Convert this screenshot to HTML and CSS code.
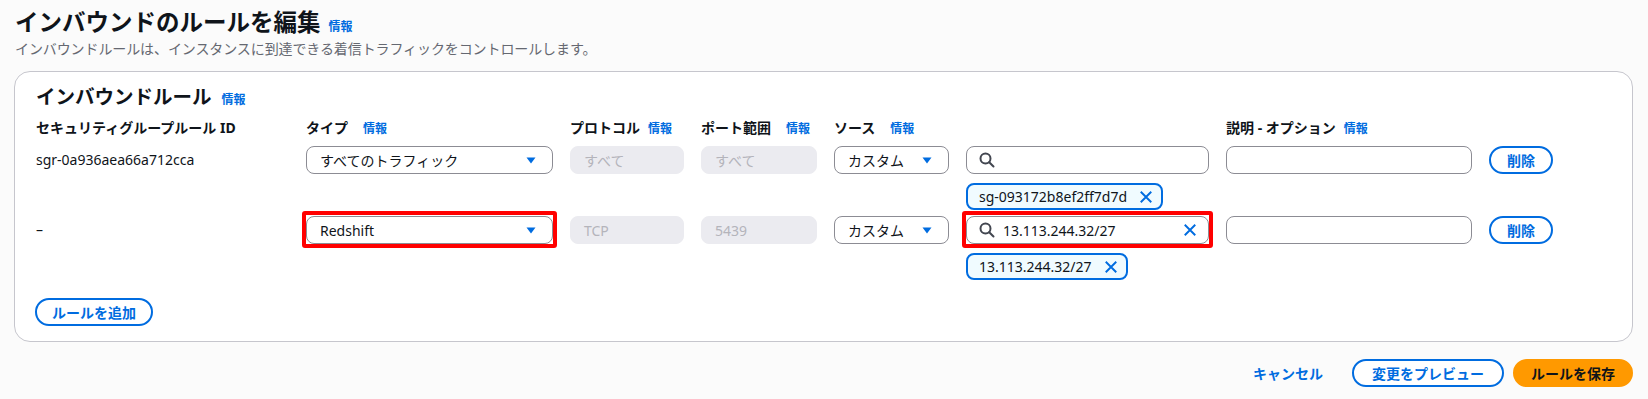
FILE: index.html
```html
<!DOCTYPE html>
<html lang="ja">
<head>
    <meta charset="UTF-8">
    <meta name="viewport" content="width=device-width, initial-scale=1.0">
    <title>インバウンドのルールを編集</title>
    <link rel="stylesheet" href="styles.css">
</head>
<body>
    <div class="page">
        <header class="page-header">
            <h1 class="page-title">インバウンドのルールを編集 <a class="info-link" href="#">情報</a></h1>
            <p class="page-desc">インバウンドルールは、インスタンスに到達できる着信トラフィックをコントロールします。</p>
        </header>

        <section class="card">
            <h2 class="card-title">インバウンドルール <a class="info-link" href="#">情報</a></h2>

            <!-- Column labels -->
            <div class="rules-grid rules-head">
                <div class="col-label">セキュリティグループルール ID</div>
                <div class="col-label">タイプ <a class="info-link info-wide" href="#">情報</a></div>
                <div class="col-label">プロトコル <a class="info-link" href="#">情報</a></div>
                <div class="col-label">ポート範囲 <a class="info-link info-wide" href="#">情報</a></div>
                <div class="col-label">ソース <a class="info-link info-wide" href="#">情報</a></div>
                <div></div>
                <div class="col-label">説明 - オプション <a class="info-link" href="#">情報</a></div>
                <div></div>
            </div>

            <!-- Rule 1 -->
            <div class="rules-grid rule">
                <div class="rule-id">sgr-0a936aea66a712cca</div>
                <div class="select">
                    <span>すべてのトラフィック</span>
                    <svg class="caret" width="10" height="7" viewBox="0 0 10 7"><path d="M0.5 0.5h9L5 6.5z" fill="#006ce0"/></svg>
                </div>
                <div class="field field-disabled">すべて</div>
                <div class="field field-disabled">すべて</div>
                <div class="select">
                    <span>カスタム</span>
                    <svg class="caret" width="10" height="7" viewBox="0 0 10 7"><path d="M0.5 0.5h9L5 6.5z" fill="#006ce0"/></svg>
                </div>
                <div class="source-cell">
                    <div class="field search">
                        <svg class="search-icon" width="16" height="16" viewBox="0 0 16 16"><circle cx="6.5" cy="6.5" r="5" fill="none" stroke="#424650" stroke-width="2"/><path d="M10.2 10.2L14.5 14.5" stroke="#424650" stroke-width="2" stroke-linecap="round"/></svg>
                    </div>
                    <div class="token">
                        <span>sg-093172b8ef2ff7d7d</span>
                        <svg width="14" height="14" viewBox="0 0 16 16"><path d="M2 2l12 12M14 2L2 14" stroke="#006ce0" stroke-width="2.2"/></svg>
                    </div>
                </div>
                <div class="field"></div>
                <button class="btn btn-normal">削除</button>
            </div>

            <!-- Rule 2 -->
            <div class="rules-grid rule">
                <div class="rule-id">–</div>
                <div class="select flagged">
                    <span>Redshift</span>
                    <svg class="caret" width="10" height="7" viewBox="0 0 10 7"><path d="M0.5 0.5h9L5 6.5z" fill="#006ce0"/></svg>
                </div>
                <div class="field field-disabled">TCP</div>
                <div class="field field-disabled">5439</div>
                <div class="select">
                    <span>カスタム</span>
                    <svg class="caret" width="10" height="7" viewBox="0 0 10 7"><path d="M0.5 0.5h9L5 6.5z" fill="#006ce0"/></svg>
                </div>
                <div class="source-cell">
                    <div class="field search flagged">
                        <svg class="search-icon" width="16" height="16" viewBox="0 0 16 16"><circle cx="6.5" cy="6.5" r="5" fill="none" stroke="#424650" stroke-width="2"/><path d="M10.2 10.2L14.5 14.5" stroke="#424650" stroke-width="2" stroke-linecap="round"/></svg>
                        <span class="search-value">13.113.244.32/27</span>
                        <svg class="clear-icon" width="14" height="14" viewBox="0 0 16 16"><path d="M2 2l12 12M14 2L2 14" stroke="#006ce0" stroke-width="2.2"/></svg>
                    </div>
                    <div class="token">
                        <span>13.113.244.32/27</span>
                        <svg width="14" height="14" viewBox="0 0 16 16"><path d="M2 2l12 12M14 2L2 14" stroke="#006ce0" stroke-width="2.2"/></svg>
                    </div>
                </div>
                <div class="field"></div>
                <button class="btn btn-normal">削除</button>
            </div>

            <button class="btn btn-normal add-rule">ルールを追加</button>
        </section>

        <div class="actions">
            <button class="btn btn-link">キャンセル</button>
            <button class="btn btn-normal btn-wide">変更をプレビュー</button>
            <button class="btn btn-primary">ルールを保存</button>
        </div>
    </div>
</body>
</html>
```

FILE: styles.css
```css
* {
    margin: 0;
    padding: 0;
    box-sizing: border-box;
}

body {
    font-family: "Noto Sans", "Noto Sans CJK JP", sans-serif;
    font-size: 14px;
    color: #0f141a;
    background-color: #fbfbfb;
}

.page {
    padding: 7px 15px 0 14px;
}

/* Page header */
.page-title {
    display: flex;
    align-items: baseline;
    gap: 8px;
    padding-left: 1px;
    font-size: 23.5px;
    line-height: 30px;
    font-weight: 700;
}

.page-desc {
    margin-top: 2px;
    padding-left: 1px;
    line-height: 20px;
    font-size: 14px;
    letter-spacing: -0.1px;
    color: #656871;
}

.info-link {
    font-size: 12px;
    line-height: 12px;
    font-weight: 700;
    color: #006ce0;
    text-decoration: none;
    letter-spacing: 0;
}

/* Container */
.card {
    margin-top: 12px;
    background-color: #fff;
    border: 1px solid #c6c6cd;
    border-radius: 16px;
    padding: 13px 20px 15px 21px;
}

.card-title {
    display: flex;
    align-items: baseline;
    gap: 10px;
    font-size: 19.5px;
    line-height: 24px;
    font-weight: 700;
}

.rules-grid {
    display: grid;
    grid-template-columns: 253px 247px 114px 116px 115px 243px 246px 64px;
    column-gap: 17px;
}

.rules-head {
    margin-top: 9px;
    line-height: 20px;
}

.col-label {
    display: flex;
    align-items: baseline;
    gap: 8px;
    font-weight: 700;
    white-space: nowrap;
}

.info-wide {
    margin-left: 7px;
}

.rule {
    margin-top: 6px;
    align-items: start;
}

.rules-head + .rule {
    margin-top: 8px;
}

.rule-id {
    line-height: 28px;
}

/* Inputs */
.field,
.select {
    height: 28px;
    display: flex;
    align-items: center;
    padding: 0 13px;
    border: 1px solid #8c8c94;
    border-radius: 8px;
    background-color: #fff;
}

.field-disabled {
    background-color: #ebebf0;
    border-color: #ebebf0;
    color: #b4b4bb;
}

.select {
    justify-content: space-between;
    padding-right: 16px;
}

.search {
    padding: 0 11px 0 12px;
    gap: 8px;
}

.search-value {
    flex: 1;
}

.source-cell {
    display: flex;
    flex-direction: column;
    align-items: flex-start;
    gap: 9px;
}

.source-cell .search {
    width: 100%;
}

.token {
    display: inline-flex;
    align-items: center;
    gap: 12px;
    height: 27px;
    padding: 0 8px 0 11px;
    border: 2px solid #006ce0;
    border-radius: 8px;
    background-color: #f0fbff;
}

/* Red review marks */
.flagged {
    position: relative;
}

.flagged::after {
    content: "";
    position: absolute;
    top: -6px;
    left: -5px;
    right: -5px;
    bottom: -5px;
    border: 4px solid #ff0000;
    border-radius: 3px;
    pointer-events: none;
}

/* Buttons */
.btn {
    height: 28px;
    padding: 0 16px;
    border: 2px solid #006ce0;
    border-radius: 20px;
    background-color: #fff;
    color: #006ce0;
    font-family: inherit;
    font-size: 14px;
    font-weight: 700;
    cursor: pointer;
}

.btn-wide {
    padding: 0 18px;
}

.add-rule {
    margin-top: 18px;
    margin-left: -1px;
    padding: 0 15px;
}

.btn-link {
    border-color: transparent;
    background-color: transparent;
    padding: 0 18px;
}

.btn-primary {
    background-color: #ff9900;
    border-color: #ff9900;
    color: #0f141a;
}

.actions {
    display: flex;
    justify-content: flex-end;
    gap: 9px;
    margin-top: 17px;
}
```
